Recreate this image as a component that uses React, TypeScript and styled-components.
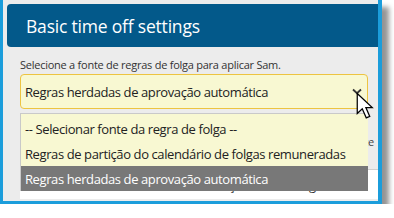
import styled, { createGlobalStyle } from "styled-components";

const Global = createGlobalStyle`
  html, body {
    margin: 0;
    padding: 0;
    background: #ffffff;
  }
  * { box-sizing: border-box; }
`;

const Frame = styled.div`
  position: relative;
  width: 382px;
  height: 204px;
  border-left: 3px solid #1b9ddb;
  border-right: 4px solid #1b9ddb;
  border-bottom: 3px solid #1b9ddb;
  background: #ececec;
  box-shadow: 7px 7px 5px rgba(0, 0, 0, 0.42);
  padding-top: 4px;
  font-family: "Open Sans", "Noto Sans", sans-serif;
`;

const Header = styled.div`
  margin-left: 4px;
  height: 43px;
  display: flex;
  align-items: center;
  padding-left: 19px;
  background: #03598a;
  border-radius: 4px 0 0 4px;
  color: #ffffff;
  font-size: 17.5px;
  letter-spacing: -0.2px;
`;

const Body = styled.div`
  display: flex;
  flex-direction: column;
  padding-left: 17px;
`;

const FieldLabel = styled.div`
  margin-top: 10px;
  font-size: 11px;
  letter-spacing: -0.25px;
  line-height: 16px;
  color: #333;
  white-space: nowrap;
`;

const Select = styled.div`
  margin-top: 1px;
  width: 348px;
  height: 35px;
  display: flex;
  align-items: center;
  justify-content: space-between;
  padding: 0 5px 0 4px;
  background: #f8f8d2;
  border: 1px solid #edc441;
  border-radius: 4px;
  color: #222;
  font-size: 13px;
  letter-spacing: -0.4px;
  white-space: nowrap;
`;

const HiddenRow = styled.div`
  margin-top: 25px;
  padding-right: 4px;
  text-align: right;
  white-space: nowrap;
  overflow: hidden;
  font-size: 11px;
  letter-spacing: -0.25px;
  line-height: 16px;
  color: #444;
`;

const Panel = styled.div`
  margin-top: 19px;
  height: 30px;
  background: #ffffff;
  border-top: 1px solid #cfcfcf;
  padding: 6px 0 0 5px;
  font-size: 13px;
  letter-spacing: -0.4px;
  color: #333;
  white-space: nowrap;
`;

const Options = styled.div`
  position: absolute;
  top: 113px;
  left: 17px;
  width: 348px;
  height: 78px;
  padding-top: 3px;
  background: #f8f8d2;
  border-top: 1px solid #c9c9c9;
  border-left: 1px solid #c9c9c9;
  display: flex;
  flex-direction: column;
`;

const Option = styled.div<{ $active?: boolean }>`
  flex: ${({ $active }) => ($active ? "0 0 25px" : "0 0 24.5px")};
  display: flex;
  align-items: center;
  padding-left: 4px;
  font-size: 13px;
  letter-spacing: -0.4px;
  white-space: nowrap;
  color: ${({ $active }) => ($active ? "#ffffff" : "#222")};
  background: ${({ $active }) => ($active ? "#787878" : "transparent")};
`;

const Pointer = styled.svg`
  position: absolute;
  left: 353px;
  top: 92px;
`;

export default function App() {
  return (
    <>
      <Global />
      <Frame>
        <Header>Basic time off settings</Header>
        <Body>
          <FieldLabel>Selecione a fonte de regras de folga para aplicar Sam.</FieldLabel>
          <Select>
            <span>Regras herdadas de aprovação automática</span>
            <svg width="10" height="7" viewBox="0 0 10 7">
              <path d="M1 1.5 L5 5.2 L9 1.5" fill="none" stroke="#333" strokeWidth="1.8" />
            </svg>
          </Select>
          <HiddenRow>Dias de espera após a contratação antes que o sistema autorize</HiddenRow>
          <Panel>Nenhum atraso na data de contratação está em vigor.</Panel>
        </Body>
        <Options>
          <Option>-- Selecionar fonte da regra de folga --</Option>
          <Option>Regras de partição do calendário de folgas remuneradas</Option>
          <Option $active>Regras herdadas de aprovação automática</Option>
        </Options>
        <Pointer width="20" height="28" viewBox="0 0 16 22">
          <path
            d="M1 1 L1 17 L5 13.2 L8.2 20.5 L11 19.3 L7.9 12.2 L13 12.2 Z"
            fill="#ffffff"
            stroke="#000000"
            strokeWidth="1"
            strokeLinejoin="miter"
          />
        </Pointer>
      </Frame>
    </>
  );
}
